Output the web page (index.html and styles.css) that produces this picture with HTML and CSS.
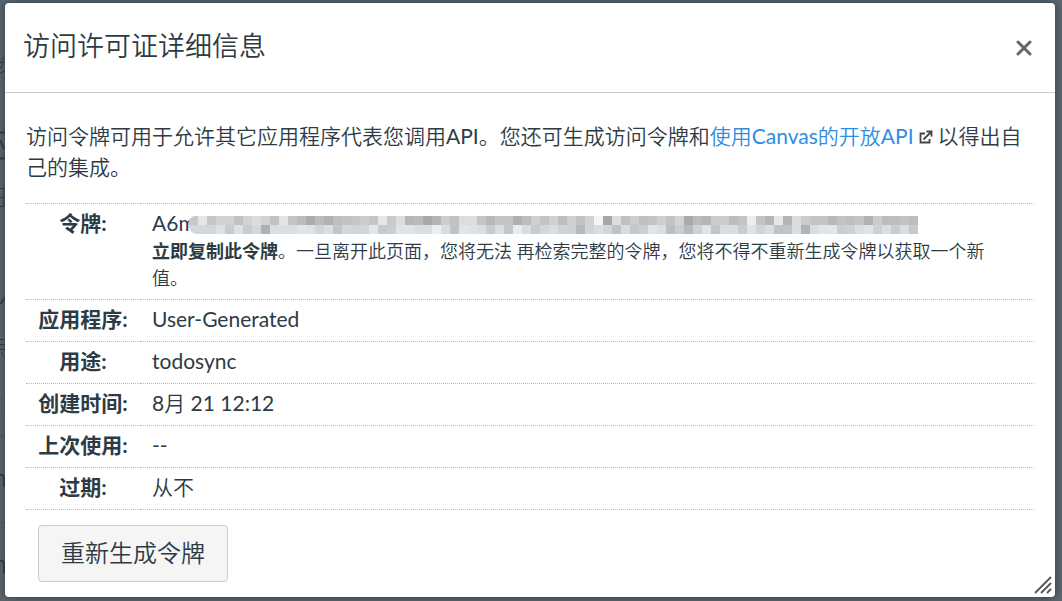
FILE: index.html
```html
<!DOCTYPE html>
<html lang="zh-CN">
<head>
<meta charset="utf-8">
<meta name="viewport" content="width=device-width, initial-scale=1">
<title>访问许可证详细信息</title>
<link rel="stylesheet" href="styles.css">
</head>
<body>
<svg class="backdrop" width="5" height="601" viewBox="0 0 5 601" aria-hidden="true">
  <g fill="none" stroke="#2d3b45" stroke-width="1">
    <path d="M5 56L0 63L4 62L0 69M0 73L5 71"/>
    <path d="M0 132.500H5M0 140L4 149" stroke-width="2"/>
    <path d="M0 158.500H5" stroke-width="2"/>
    <path d="M0 188.500H4V207M0 197.500H4M0 206.500H4"/>
    <path d="M0 304L5 298" stroke-width="2"/>
    <path d="M0 339.500H5M0 344.500H5M0 349.500H5M1 352L5 358"/>
    <path d="M0 399H2M0 406H2M0 411H2" stroke="#2b5877"/>
    <path d="M0 436.500H5M0 522.500H5" stroke="#4a5761"/>
    <path d="M0 475Q4 474 4 479V487M0 561Q4 560 4 565V573" stroke-width="2"/>
  </g>
</svg>
<section class="dialog" role="dialog" aria-labelledby="dialog-title">
  <header class="dialog-header">
    <h1 id="dialog-title" class="dialog-title">访问许可证详细信息</h1>
    <button class="close" type="button" aria-label="关闭">
      <svg width="16" height="16" viewBox="0 0 16 16" aria-hidden="true"><path d="M2 2L14 14M14 2L2 14" fill="none" stroke="#666" stroke-width="3" stroke-linecap="round"/></svg>
    </button>
  </header>
  <div class="dialog-body">
    <p class="intro">访问令牌可用于允许其它应用程序代表您调用API。您还可生成访问令牌和<a class="link" href="#api">使用Canvas的开放API<svg class="external" width="14" height="14" viewBox="0 0 14 14" aria-hidden="true"><path d="M6 3.500H1.500V12.500H10.500V9M4.500 9.500L12 2M7.500 1.500H12.500V6.500" fill="none" stroke="#444" stroke-width="1.800"/></svg></a>以得出自己的集成。</p>
    <table class="details">
      <tbody>
        <tr>
          <th scope="row">令牌:</th>
          <td>
            <div class="token">A6m<svg class="mosaic" id="mosaic" width="729" height="18" viewBox="0 0 729 18" role="img" aria-label="已隐藏"></svg></div>
            <div class="hint"><strong>立即复制此令牌</strong>。一旦离开此页面，您将无法 再检索完整的令牌，您将不得不重新生成令牌以获取一个新值。</div>
          </td>
        </tr>
        <tr><th scope="row">应用程序:</th><td>User-Generated</td></tr>
        <tr><th scope="row">用途:</th><td>todosync</td></tr>
        <tr><th scope="row">创建时间:</th><td>8月 21 12:12</td></tr>
        <tr><th scope="row">上次使用:</th><td>--</td></tr>
        <tr><th scope="row">过期:</th><td>从不</td></tr>
      </tbody>
    </table>
    <button class="regenerate" type="button">重新生成令牌</button>
  </div>
  <svg class="grip" width="18" height="18" viewBox="0 0 18 18" aria-hidden="true"><path d="M1 17L17 1M7 17L17 7M13 17L17 13" fill="none" stroke="#555" stroke-width="1.800"/></svg>
</section>
<script src="mosaic.js"></script>
</body>
</html>
```

FILE: styles.css
```css
* { box-sizing: border-box; }

body {
  margin: 0;
  padding: 3px 7px 4px 5px;
  min-height: 100vh;
  display: flex;
  background: #5c6770;
  color: #2d3b45;
  font-family: Lato, "Noto Sans CJK SC DemiLight", "Noto Sans CJK SC Light", "Noto Sans CJK SC", sans-serif;
  font-size: 21px;
  line-height: 31px;
}

.backdrop {
  position: absolute;
  left: 0;
  top: 0;
}

.dialog {
  position: relative;
  flex: 1;
  min-width: 0;
  background: #fff;
  border-radius: 4px;
  box-shadow: 0 0 8px #2d3b45;
}

.dialog-header {
  display: flex;
  align-items: center;
  justify-content: space-between;
  height: 90px;
  padding: 0 23px 0 18px;
  border-bottom: 1px solid #c7cdd1;
}

.dialog-title {
  margin: 0;
  padding-bottom: 4px;
  font-size: 27px;
  line-height: 40px;
  font-weight: 400;
}

.close {
  display: flex;
  padding: 0;
  border: 0;
  background: none;
}

.dialog-body { padding: 27px 21px 15px; }

.intro { margin: 0 0 21px; }

.link {
  color: #2f8de4;
  text-decoration: none;
}

.external { margin: 0 5px; }

.details {
  width: 100%;
  border-collapse: collapse;
}

.details tr {
  border-top: 1px dotted #b4babe;
  border-bottom: 1px dotted #b4babe;
}

.details th,
.details td {
  padding: 3px 12px 7px;
  vertical-align: top;
}

.details th {
  width: 114px;
  text-align: center;
  white-space: nowrap;
}

.details th,
.hint strong {
  font-family: Lato, "Noto Sans CJK SC", sans-serif;
  font-weight: 700;
}

.details td { text-align: left; }

.token {
  display: flex;
  align-items: center;
  height: 31px;
}

.mosaic {
  flex: none;
  margin: 4px 0 0 -7px;
  border-top-left-radius: 6px;
  border-bottom-left-radius: 8px;
}

.hint {
  padding-right: 20px;
  font-size: 18px;
  line-height: 27px;
}

.regenerate {
  display: block;
  margin: 15px 12px 0;
  padding: 7px 22px 9px;
  border: 1px solid #c7cdd1;
  border-radius: 4px;
  background: #f5f5f5;
  color: #2d3b45;
  font-family: inherit;
  font-size: 24px;
  line-height: 39px;
}

.grip {
  position: absolute;
  right: 3px;
  bottom: 3px;
}
```

FILE: mosaic.js
```javascript
// Grey level of each 9px tile that hides the token, one string per row.
const rows = [
  "c8e6c6d2d2c2d3ddd2c2e3c3bbacbbb1bec2c5ccc5e6caddb7baa8b4ccc2ddddc4b8c4c4b0bccfc4d0bdd0c2d3f5a6ddc0cdc0c4cfc4d3aabbb4ccccbdc4eec3b5e7b4dbcbc4c4b8c3bfc4b2ccbdbdc3bd",
  "d6d6d6e0cae0cbd6b0dddddde3e2d4ddc4d7d4d4e5c8cde3e3ddddeedcc2e4e2ddcbddc6ebdcc9d6dcd2d0b8d3ddd5c2dbc7cee4ddbdccbad0e2c4dcdccbe2d3ddc2c3ddb3dce4e5cdd0dde3d0ddcbddc9"
];
const mosaic = document.getElementById("mosaic");
rows.forEach((row, y) => {
  row.match(/../g).forEach((hex, x) => {
    const level = parseInt(hex, 16);
    const tile = document.createElementNS("http://www.w3.org/2000/svg", "rect");
    tile.setAttribute("x", x * 9);
    tile.setAttribute("y", y * 9);
    tile.setAttribute("width", 9);
    tile.setAttribute("height", 9);
    tile.setAttribute("fill", `rgb(${level - 2}, ${level + 1}, ${level + 3})`);
    mosaic.append(tile);
  });
});
```
